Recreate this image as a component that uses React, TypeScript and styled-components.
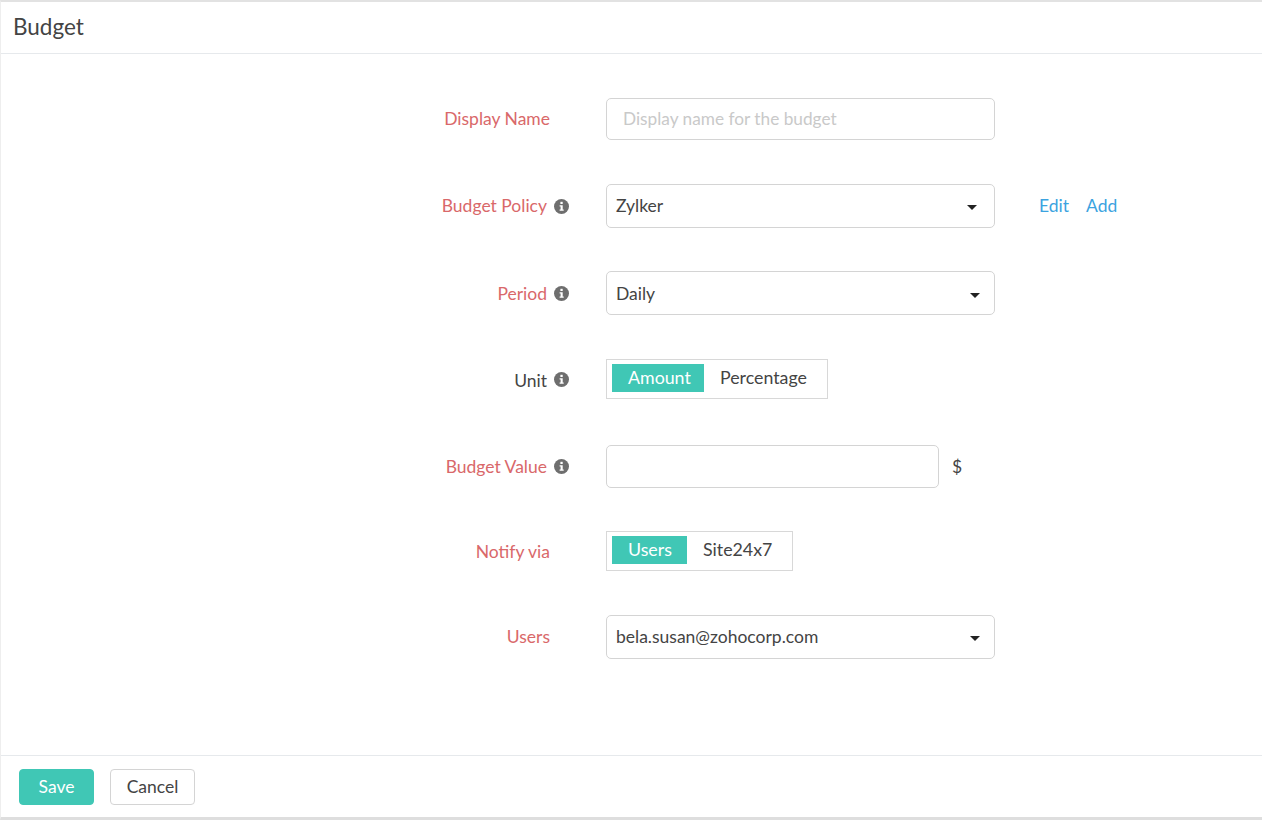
import React from "react";
import styled, { createGlobalStyle } from "styled-components";

const GlobalStyle = createGlobalStyle`
  html, body {
    margin: 0;
    padding: 0;
    background: #fff;
  }
  body {
    font-family: Lato, "Open Sans", sans-serif;
    color: #444;
  }
`;

const Page = styled.div`
  width: 1262px;
  height: 820px;
  box-sizing: border-box;
  display: flex;
  flex-direction: column;
  border-top: 2px solid #e2e2e2;
  border-bottom: 3px solid #dedede;
  border-left: 1px solid #eee;
  overflow: hidden;
`;

const Header = styled.div`
  height: 52px;
  flex: none;
  box-sizing: border-box;
  display: flex;
  align-items: center;
  padding: 0 0 2px 12px;
  border-bottom: 1px solid #e6e9ec;
  font-size: 22.5px;
  color: #444;
`;

const Form = styled.div`
  flex: 1;
  display: flex;
  flex-direction: column;
  padding-top: 44px;
`;

const Row = styled.div<{ $mb: number }>`
  display: flex;
  align-items: center;
  margin-bottom: ${(p) => p.$mb}px;
`;

const LabelCell = styled.div`
  width: 568px;
  flex: none;
  display: flex;
  justify-content: flex-end;
  align-items: center;
  margin-right: 37px;
`;

const Label = styled.div<{ $required?: boolean; $pt?: number }>`
  font-size: 17.5px;
  padding: ${(p) => (p.$pt ? `${p.$pt}px 0 0` : "0 0 1px")};
  color: ${(p) => (p.$required ? "#d9686a" : "#444")};
  margin-right: 19px;
`;

const LabelWithInfo = styled(Label)`
  margin-right: 7px;
`;

const Input = styled.input<{ $width: number; $height: number }>`
  width: ${(p) => p.$width}px;
  height: ${(p) => p.$height}px;
  box-sizing: border-box;
  padding: 0 16px 2px;
  border: 1px solid #d4d4d4;
  border-radius: 5px;
  font-family: inherit;
  font-size: 17.25px;
  color: #444;
  outline: none;

  &::placeholder {
    color: #c9c9c9;
    opacity: 1;
  }
`;

const Select = styled.div<{ $caretGap?: number; $low?: boolean }>`
  width: 389px;
  height: 44px;
  box-sizing: border-box;
  display: flex;
  align-items: center;
  justify-content: space-between;
  padding: ${(p) => (p.$low ? "1px" : "0")} ${(p) => p.$caretGap ?? 14}px
    ${(p) => (p.$low ? "0" : "1px")} 9px;
  border: 1px solid #d4d4d4;
  border-radius: 5px;
  font-size: 17.5px;
  color: #444;
`;

const Caret = styled.span`
  width: 0;
  height: 0;
  margin-top: 3px;
  border-left: 5.5px solid transparent;
  border-right: 5.5px solid transparent;
  border-top: 5px solid #222;
`;

const Toggle = styled.div`
  height: 40px;
  box-sizing: border-box;
  display: flex;
  align-items: center;
  padding: 0 6px 2px 5px;
  border: 1px solid #d8d8d8;
  font-size: 17.8px;
`;

const ToggleOption = styled.div<{ $active?: boolean; $width?: number }>`
  height: 28px;
  width: ${(p) => (p.$width ? `${p.$width}px` : "auto")};
  display: flex;
  align-items: center;
  padding: 0 14px 2px 16px;
  box-sizing: border-box;
  background: ${(p) => (p.$active ? "#40c7b5" : "transparent")};
  color: ${(p) => (p.$active ? "#fff" : "#444")};
`;

const Links = styled.div`
  display: flex;
  gap: 17px;
  margin-left: 44px;
  padding-bottom: 1px;
`;

const Link = styled.a`
  font-size: 17.5px;
  color: #3ba3e0;
`;

const Unit = styled.span`
  margin-left: 13px;
  font-size: 17.5px;
  color: #444;
`;

const Footer = styled.div`
  height: 62px;
  flex: none;
  box-sizing: border-box;
  display: flex;
  align-items: center;
  gap: 16px;
  padding-left: 18px;
  border-top: 1px solid #e6e9ec;
`;

const Button = styled.button<{ $primary?: boolean }>`
  height: 36px;
  box-sizing: border-box;
  padding: 0;
  width: ${(p) => (p.$primary ? "75px" : "85px")};
  border: 1px solid ${(p) => (p.$primary ? "#40c7b5" : "#d4d4d4")};
  border-radius: 4px;
  background: ${(p) => (p.$primary ? "#40c7b5" : "#fff")};
  color: ${(p) => (p.$primary ? "#fff" : "#444")};
  font-family: inherit;
  font-size: 17.5px;
`;

const InfoSvg = styled.svg`
  width: 15px;
  height: 15px;
  flex: none;
`;

const InfoIcon = () => (
  <InfoSvg viewBox="0 0 15 15">
    <circle cx="7.5" cy="7.5" r="7.5" fill="#6e6e6e" />
    <rect x="6.4" y="2.8" width="2.3" height="2.2" fill="#fff" />
    <path d="M5.6 6.2h3.1v4.2h1v1.4H5.6v-1.4h1V7.6h-1z" fill="#fff" />
  </InfoSvg>
);

const App: React.FC = () => {
  return (
    <>
      <GlobalStyle />
      <Page>
        <Header>Budget</Header>
        <Form>
          <Row $mb={44}>
            <LabelCell>
              <Label $required>Display Name</Label>
            </LabelCell>
            <Input $width={389} $height={42} placeholder="Display name for the budget" />
          </Row>
          <Row $mb={43}>
            <LabelCell>
              <LabelWithInfo $required>Budget Policy</LabelWithInfo>
              <InfoIcon />
            </LabelCell>
            <Select $caretGap={17}>
              Zylker
              <Caret />
            </Select>
            <Links>
              <Link>Edit</Link>
              <Link>Add</Link>
            </Links>
          </Row>
          <Row $mb={44}>
            <LabelCell>
              <LabelWithInfo $required $pt={1}>
                Period
              </LabelWithInfo>
              <InfoIcon />
            </LabelCell>
            <Select $low>
              Daily
              <Caret />
            </Select>
          </Row>
          <Row $mb={46}>
            <LabelCell>
              <LabelWithInfo $pt={3}>Unit</LabelWithInfo>
              <InfoIcon />
            </LabelCell>
            <Toggle>
              <ToggleOption $active $width={92}>
                Amount
              </ToggleOption>
              <ToggleOption>Percentage</ToggleOption>
            </Toggle>
          </Row>
          <Row $mb={43}>
            <LabelCell>
              <LabelWithInfo $required>Budget Value</LabelWithInfo>
              <InfoIcon />
            </LabelCell>
            <Input $width={333} $height={43} />
            <Unit>$</Unit>
          </Row>
          <Row $mb={44}>
            <LabelCell>
              <Label $required $pt={1}>
                Notify via
              </Label>
            </LabelCell>
            <Toggle>
              <ToggleOption $active $width={75}>
                Users
              </ToggleOption>
              <ToggleOption>Site24x7</ToggleOption>
            </Toggle>
          </Row>
          <Row $mb={0}>
            <LabelCell>
              <Label $required>Users</Label>
            </LabelCell>
            <Select>
              bela.susan@zohocorp.com
              <Caret />
            </Select>
          </Row>
        </Form>
        <Footer>
          <Button $primary>Save</Button>
          <Button>Cancel</Button>
        </Footer>
      </Page>
    </>
  );
};

export default App;
